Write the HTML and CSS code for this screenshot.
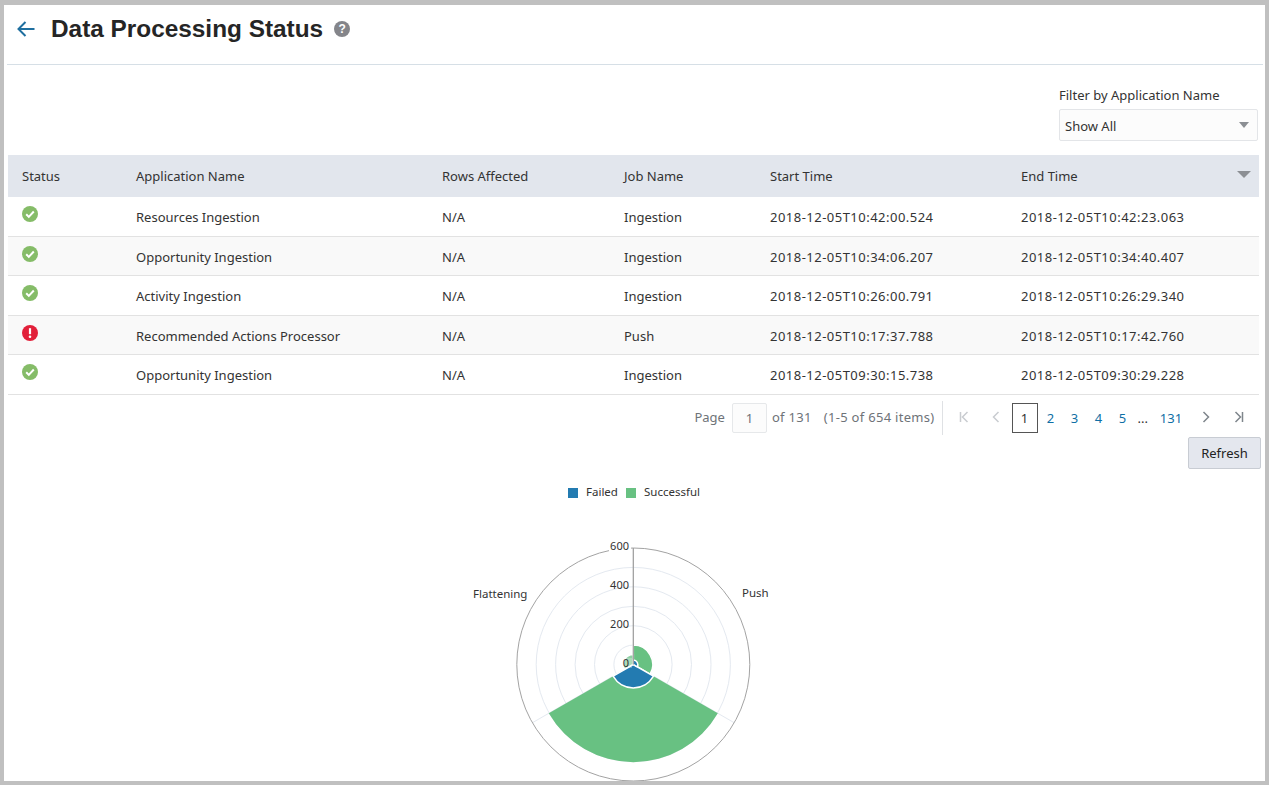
FILE: index.html
```html
<!DOCTYPE html>
<html lang="en">
<head>
<meta charset="utf-8">
<title>Data Processing Status</title>
<link rel="stylesheet" href="styles.css">
</head>
<body>
<main class="panel">
  <header class="page-head">
    <svg class="back" width="20" height="18" viewBox="0 0 20 18"><path d="M18.500 9H2.500M9.500 2L2.500 9l7 7" fill="none" stroke="#1f6f9f" stroke-width="2"/></svg>
    <h1>Data Processing Status</h1>
    <span class="help">?</span>
  </header>
  <section class="filter-row">
    <div class="filter">
      <label>Filter by Application Name</label>
      <div class="select"><span class="select-value">Show All</span><i class="caret"></i></div>
    </div>
  </section>
  <table class="jobs">
    <thead>
      <tr><th class="c1">Status</th><th class="c2">Application Name</th><th class="c3">Rows Affected</th><th class="c4">Job Name</th><th class="c5">Start Time</th><th class="c6">End Time<i class="caret big"></i></th></tr>
    </thead>
    <tbody>
      <tr><td><svg class="st" viewBox="0 0 16 16"><circle cx="8" cy="8" r="8" fill="#85bc68"/><path d="M4.200 8.300l2.600 2.600 5-5.400" fill="none" stroke="#fff" stroke-width="2"/></svg></td><td>Resources Ingestion</td><td>N/A</td><td>Ingestion</td><td class="time">2018-12-05T10:42:00.524</td><td class="time">2018-12-05T10:42:23.063</td></tr>
      <tr><td><svg class="st" viewBox="0 0 16 16"><circle cx="8" cy="8" r="8" fill="#85bc68"/><path d="M4.200 8.300l2.600 2.600 5-5.400" fill="none" stroke="#fff" stroke-width="2"/></svg></td><td>Opportunity Ingestion</td><td>N/A</td><td>Ingestion</td><td class="time">2018-12-05T10:34:06.207</td><td class="time">2018-12-05T10:34:40.407</td></tr>
      <tr><td><svg class="st" viewBox="0 0 16 16"><circle cx="8" cy="8" r="8" fill="#85bc68"/><path d="M4.200 8.300l2.600 2.600 5-5.400" fill="none" stroke="#fff" stroke-width="2"/></svg></td><td>Activity Ingestion</td><td>N/A</td><td>Ingestion</td><td class="time">2018-12-05T10:26:00.791</td><td class="time">2018-12-05T10:26:29.340</td></tr>
      <tr><td><svg class="st" viewBox="0 0 16 16"><circle cx="8" cy="8" r="8" fill="#e2203a"/><path d="M8 3.200v6" stroke="#fff" stroke-width="2.200"/><circle cx="8" cy="11.800" r="1.300" fill="#fff"/></svg></td><td>Recommended Actions Processor</td><td>N/A</td><td>Push</td><td class="time">2018-12-05T10:17:37.788</td><td class="time">2018-12-05T10:17:42.760</td></tr>
      <tr><td><svg class="st" viewBox="0 0 16 16"><circle cx="8" cy="8" r="8" fill="#85bc68"/><path d="M4.200 8.300l2.600 2.600 5-5.400" fill="none" stroke="#fff" stroke-width="2"/></svg></td><td>Opportunity Ingestion</td><td>N/A</td><td>Ingestion</td><td class="time">2018-12-05T09:30:15.738</td><td class="time">2018-12-05T09:30:29.228</td></tr>
    </tbody>
  </table>
  <nav class="pager">
    <div class="pager-info">
      <span class="info-text">Page</span><span class="page-input">1</span><span class="info-text wide-text">of 131</span><span class="info-text items wide-text">(1-5 of 654 items)</span>
    </div>
    <div class="pager-nav">
      <svg class="pg first" width="10" height="12" viewBox="0 0 10 12"><path d="M1.500 1v10M8.500 1L3.500 6l5 5" fill="none" stroke="#c9ccd0" stroke-width="1.500"/></svg>
      <svg class="pg prev" width="8" height="12" viewBox="0 0 8 12"><path d="M6.500 1L1.500 6l5 5" fill="none" stroke="#c9ccd0" stroke-width="1.500"/></svg>
      <span class="pg-num current">1</span>
      <a class="pg-num">2</a><a class="pg-num">3</a><a class="pg-num">4</a><a class="pg-num">5</a>
      <span class="dots">...</span>
      <a class="pg-num wide">131</a>
      <svg class="pg next" width="8" height="12" viewBox="0 0 8 12"><path d="M1.500 1l5 5-5 5" fill="none" stroke="#7f868c" stroke-width="1.500"/></svg>
      <svg class="pg last" width="10" height="12" viewBox="0 0 10 12"><path d="M1.500 1l5 5-5 5M8.500 1v10" fill="none" stroke="#7f868c" stroke-width="1.500"/></svg>
    </div>
  </nav>
  <div class="actions"><button class="refresh">Refresh</button></div>
  <figure class="chart">
    <svg width="1257" height="320" viewBox="0 0 1257 320">
      <g transform="translate(-7 -468)">
        <rect x="568" y="487" width="10" height="10" fill="#237bb1"/>
        <text class="t" x="586" y="495">Failed</text>
        <rect x="626" y="487" width="10" height="10" fill="#68c182"/>
        <text class="t" x="644" y="495">Successful</text>
        <g fill="none" stroke="#e4e9f0">
          <circle cx="633.300" cy="663.500" r="19.400"/>
          <circle cx="633.300" cy="663.500" r="38.800"/>
          <circle cx="633.300" cy="663.500" r="58.200"/>
          <circle cx="633.300" cy="663.500" r="77.700"/>
          <circle cx="633.300" cy="663.500" r="97.100"/>
          <path d="M633.300 663.500L734.300 721.800M633.300 663.500L532.300 721.800"/>
        </g>
        <circle cx="633.300" cy="663.500" r="116.500" fill="none" stroke="#a3a3a3"/>
        <g stroke="#fff" stroke-width="1.500">
          <path d="M633.300 663.500V644.100A19.400 19.400 0 0 1 650.100 673.200Z" fill="#68c182"/>
          <path d="M633.300 663.500V653.500A10 10 0 0 0 624.600 668.500Z" fill="#8fcfa2"/>
          <path d="M653.500 675.200L717.800 712.300A97.500 97.500 0 0 1 548.800 712.300L613.100 675.200A23.300 23.300 0 0 0 653.500 675.200Z" fill="#68c182" stroke="none"/>
          <path d="M633.300 663.500L653.500 675.200A23.300 23.300 0 0 1 613.100 675.200Z" fill="#237bb1"/>
          <path d="M633.300 663.500V659A4.500 4.500 0 0 1 637.200 665.800Z" fill="#237bb1"/>
        </g>
        <path d="M633.300 547V663.500" stroke="#9a9a9a" stroke-width="1.200"/>
        <rect x="622" y="657" width="10" height="10" fill="#fff" opacity=".25"/>
        <g class="axis">
          <rect x="609" y="539" width="22" height="14" fill="#fff"/>
          <text x="629" y="549">600</text>
          <text x="629" y="588">400</text>
          <text x="629" y="627">200</text>
          <text x="629" y="666">0</text>
        </g>
        <text class="t" x="473" y="597">Flattening</text>
        <text class="t" x="742" y="596">Push</text>
      </g>
    </svg>
  </figure>
</main>
</body>
</html>
```
FILE: styles.css
```css
html, body { margin: 0; height: 100%; }
body {
  background: #c0c0c0;
  padding: 5px 4px 4px 4px;
  box-sizing: border-box;
  height: 785px;
  overflow: hidden;
  font-family: "Noto Sans", "Open Sans", sans-serif;
  font-size: 13px;
  color: #333;
}
.panel {
  background: #fff;
  height: 776px;
  overflow: hidden;
  padding: 0 0 0 3px;
  box-sizing: border-box;
}
.page-head {
  display: flex;
  align-items: center;
  height: 60px;
  margin-right: 2px;
  border-bottom: 1px solid #d6dfe6;
  padding: 0 0 11px 9px;
  box-sizing: border-box;
}
.back { margin-right: 15px; }
h1 {
  margin: 0;
  font: bold 24.360px "Liberation Sans", Arial, sans-serif;
  color: #252525;
}
.help {
  width: 16px; height: 16px; margin-left: 11px;
  border-radius: 50%;
  background: #84858a;
  color: #fff;
  font: bold 12px/16px "Liberation Sans", sans-serif;
  text-align: center;
}
.filter-row { display: flex; justify-content: flex-end; height: 90px; padding-right: 7px; }
.filter { width: 199px; padding-top: 21px; }
.filter label { display: block; line-height: 18px; }
.select {
  display: flex; align-items: center; justify-content: space-between;
  height: 30px; margin-top: 5px; padding: 0 5px;
  background: #fcfcfc; border: 1px solid #e3e5e8; border-radius: 2px;
}
.select-value { padding-top: 2px; }
.caret { width: 0; height: 0; border: 5.500px solid transparent; border-top: 6px solid #8c8f94; border-bottom: 0; margin-right: 3px; }
.caret.big { position: absolute; right: 8px; top: 16px; border-width: 7px 7px 0; border-top-color: #8c8f94; margin: 0; }
.jobs { width: 1251px; margin-left: 1px; border-collapse: collapse; table-layout: fixed; }
.jobs th { background: #e2e6ed; height: 41.500px; padding: 0 0 0 14px; text-align: left; font-weight: 400; position: relative; box-sizing: border-box; }
.jobs td { height: 39.500px; padding: 2px 0 0 14px; border-bottom: 1px solid #e2e2e2; box-sizing: border-box; }
.jobs td.time { letter-spacing: .48px; }
.jobs tbody tr:nth-child(even) { background: #f9f9f9; }
.c1 { width: 114px; } .c2 { width: 306px; } .c3 { width: 182px; } .c4 { width: 146px; } .c5 { width: 251px; }
.st { display: block; width: 16px; height: 16px; margin-top: -6px; }
.pager { display: flex; justify-content: flex-end; align-items: center; height: 42px; box-sizing: border-box; padding: 4px 21px 0 0; color: #6e7378; }
.pager-info { display: flex; align-items: center; height: 34px; padding-right: 7px; border-right: 1px solid #dfe1e4; margin-right: 16px; }
.info-text { padding-bottom: 2px; }
.wide-text { letter-spacing: .3px; }
.page-input { width: 33px; height: 28px; margin: 0 5px 0 7px; line-height: 28px; text-align: center; border: 1px solid #e6e8ea; border-radius: 2px; background: #fcfcfc; }
.items { margin-left: 12px; }
.pager-nav { display: flex; align-items: center; }
.pg { margin-bottom: 2px; }
.pg.first { margin-right: 23px; } .pg.prev { margin-right: 12px; }
.pg.next { margin-left: 17px; margin-right: 24px; }
.pg-num { width: 24px; text-align: center; color: #0f6fa5; line-height: 30px; }
.pg-num.wide { width: 28px; margin-left: 9px; }
.pg-num.current { width: 24px; height: 28px; margin-right: 1px; border: 1px solid #555; color: #333; line-height: 28px; }
.dots { color: #333; margin-left: 3px; }
.actions { display: flex; justify-content: flex-end; padding-right: 4px; }
.refresh {
  width: 73px; height: 32px; padding: 0;
  font: 13px "Noto Sans", sans-serif; color: #222;
  background: #e4e7ee; border: 1px solid #c8ccd3; border-radius: 2px;
}
.chart { margin: 0; height: 320px; }
.chart svg { display: block; }
.t, .axis text { font: 11.500px "Noto Sans", sans-serif; fill: #333; }
.axis text { font-size: 11px; text-anchor: end; }
```
